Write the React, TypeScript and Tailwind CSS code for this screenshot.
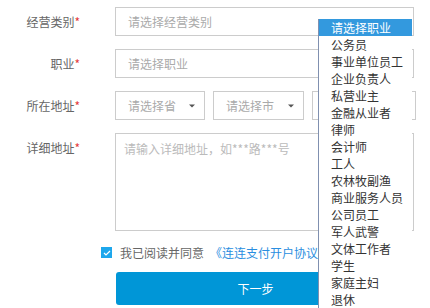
import React from "react";

const font = { fontFamily: '"Microsoft YaHei", "Noto Sans CJK SC", "Noto Sans", sans-serif' };

const items = [
  "请选择职业",
  "公务员",
  "事业单位员工",
  "企业负责人",
  "私营业主",
  "金融从业者",
  "律师",
  "会计师",
  "工人",
  "农林牧副渔",
  "商业服务人员",
  "公司员工",
  "军人武警",
  "文体工作者",
  "学生",
  "家庭主妇",
  "退休",
];

function Label({ text }: { text: string }) {
  return (
    <div className="w-[80px] shrink-0 text-right text-[12px] text-[#666]">
      {text}
      <span className="text-[#e4393c]">*</span>
    </div>
  );
}

function Arrow() {
  return (
    <svg width="6" height="4" viewBox="0 0 6 4" className="shrink-0">
      <path d="M0 0.5 L6 0.5 L3 3.5 Z" fill="#555" />
    </svg>
  );
}

function SelectBox({ w, text }: { w: string; text: string }) {
  return (
    <div className={`${w} h-[29px] border border-[#ccc] flex items-center justify-between pl-[12px] pr-[9px] text-[12px] text-[#aaa]`}>
      <span>{text}</span>
      <Arrow />
    </div>
  );
}

export default function App() {
  return (
    <div className="relative w-[430px] h-[308px] bg-white overflow-hidden" style={font}>
      <div className="pt-[7px] flex flex-col">
        <div className="flex items-center h-[29px]">
          <Label text="经营类别" />
          <div className="ml-[35px] w-[299px] h-[29px] border border-[#ccc] flex items-center pl-[12px] text-[12px] text-[#aaa]">
            请选择经营类别
          </div>
        </div>
        <div className="flex items-center h-[29px] mt-[13px]">
          <Label text="职业" />
          <div className="ml-[35px] w-[299px] h-[29px] border border-[#ccc] flex items-center pl-[12px] text-[12px] text-[#aaa]">
            请选择职业
          </div>
        </div>
        <div className="flex items-center h-[29px] mt-[13px]">
          <Label text="所在地址" />
          <div className="ml-[35px] flex gap-[8px]">
            <SelectBox w="w-[90px]" text="请选择省" />
            <SelectBox w="w-[91px]" text="请选择市" />
            <div className="w-[104px] h-[29px] border border-[#ccc]" />
          </div>
        </div>
        <div className="flex items-start mt-[13px]">
          <div className="pt-[6px] leading-[17px]">
            <Label text="详细地址" />
          </div>
          <div className="ml-[35px] w-[299px] h-[98px] border border-[#ccc] pl-[8px] pt-[6px] text-[12px] leading-[17px] text-[#bbb]">
            请输入详细地址，如***路***号
          </div>
        </div>
        <div className="flex items-center pl-[101px] mt-[15px] h-[13px]">
          <div className="w-[11px] h-[11px] bg-[#1ea7ec] flex items-center justify-center">
            <svg width="8" height="6" viewBox="0 0 8 6">
              <path d="M1 3 L3 5 L7 1" stroke="#fff" strokeWidth="1.2" fill="none" />
            </svg>
          </div>
          <span className="ml-[8px] text-[12px] text-[#666] whitespace-nowrap">我已阅读并同意</span>
          <span className="ml-[6px] text-[12px] text-[#2a8ee0] whitespace-nowrap">《连连支付开户协议》</span>
        </div>
        <div className="pl-[116px] mt-[13px]">
          <div className="w-[279px] h-[33px] rounded-[3px] bg-[#0096d7] flex items-center justify-center text-[12px] text-white">
            下一步
          </div>
        </div>
      </div>

      <div className="absolute left-[318px] top-[19px] bottom-0 w-[94px] bg-white border-l border-[#8090b0]">
        {items.map((it, i) => (
          <div
            key={it}
            className={
              i === 0
                ? "h-[17px] leading-[17px] pl-[12px] text-[12px] bg-[#3399de] text-white"
                : "h-[17px] leading-[17px] pl-[12px] text-[12px] text-[#333]"
            }
          >
            {it}
          </div>
        ))}
      </div>
    </div>
  );
}
